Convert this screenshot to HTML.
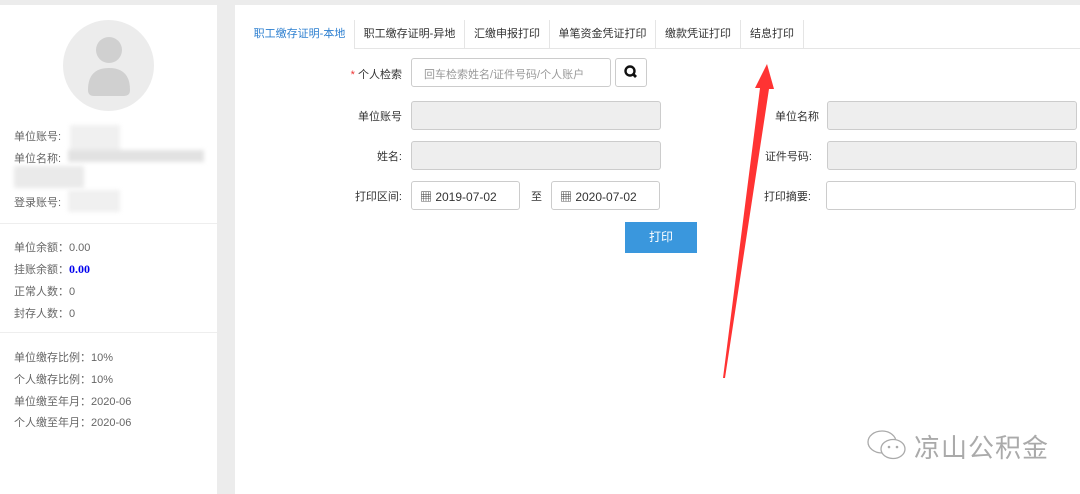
<!DOCTYPE html>
<html><head><meta charset="utf-8"><style>
*{margin:0;padding:0;box-sizing:border-box}
body{width:1080px;height:494px;background:#ececec;position:relative;overflow:hidden;font-family:"Liberation Sans","Noto Sans CJK SC",sans-serif;font-size:11px;color:#555}
.a{position:absolute}
.left{left:0;top:5px;width:217px;height:489px;background:#fff}
.right{left:235px;top:5px;width:845px;height:489px;background:#fff}
.lbl{color:#666;font-size:11px;white-space:nowrap}
.blur{background:#e2e2e2;filter:blur(2px)}
.tab{top:20px;height:28px;border-right:1px solid #e5e5e5;line-height:28px;text-align:center;font-size:11px;color:#333}
.inp{border:1px solid #ccc;border-radius:3px;background:#fff;height:29px}
.dis{background:#eee}
.fl{font-size:11px;color:#333;text-align:right;white-space:nowrap}
</style></head><body>
<div class="a left"></div>
<div class="a right"></div>
<svg class="a" style="left:63px;top:20px" width="91" height="91"><circle cx="45.5" cy="45.5" r="45.5" fill="#ececec"/><circle cx="46" cy="30" r="13" fill="#d0d0d0"/><path d="M25 70 Q25 48 46 48 Q67 48 67 70 Q67 76 61 76 L31 76 Q25 76 25 70Z" fill="#d0d0d0"/></svg>
<div class="a lbl" style="left:14px;top:128px">单位账号:</div>
<div class="a lbl" style="left:14px;top:150px">单位名称:</div>
<div class="a lbl" style="left:14px;top:194px">登录账号:</div>
<div class="a blur" style="left:70px;top:125px;width:50px;height:30px;background:#f0f0f0"></div>
<div class="a blur" style="left:68px;top:150px;width:136px;height:12px"></div>
<div class="a blur" style="left:14px;top:166px;width:70px;height:22px;background:#eaeaea"></div>
<div class="a blur" style="left:68px;top:190px;width:52px;height:22px;background:#f0f0f0"></div>
<div class="a" style="left:0;top:223px;width:217px;height:1px;background:#eee"></div>
<div class="a lbl" style="left:14px;top:239px">单位余额：0.00</div>
<div class="a lbl" style="left:14px;top:261px">挂账余额：<b style="color:#0000ee;font-family:'Liberation Serif',serif;font-size:12px">0.00</b></div>
<div class="a lbl" style="left:14px;top:283px">正常人数：0</div>
<div class="a lbl" style="left:14px;top:305px">封存人数：0</div>
<div class="a" style="left:0;top:332px;width:217px;height:1px;background:#eee"></div>
<div class="a lbl" style="left:14px;top:349px">单位缴存比例：10%</div>
<div class="a lbl" style="left:14px;top:371px">个人缴存比例：10%</div>
<div class="a lbl" style="left:14px;top:393px">单位缴至年月：2020-06</div>
<div class="a lbl" style="left:14px;top:414px">个人缴至年月：2020-06</div>

<div class="a" style="left:245px;top:48px;width:835px;height:1px;background:#e5e5e5"></div>
<div class="a tab" style="left:245px;width:110px;color:#2d7fd0;background:#fff;height:29px">职工缴存证明-本地</div>
<div class="a tab" style="left:355px;width:110px">职工缴存证明-异地</div>
<div class="a tab" style="left:465px;width:85px">汇缴申报打印</div>
<div class="a tab" style="left:550px;width:106px">单笔资金凭证打印</div>
<div class="a tab" style="left:656px;width:85px">缴款凭证打印</div>
<div class="a tab" style="left:741px;width:63px">结息打印</div>

<div class="a fl" style="left:330px;top:66px;width:72px"><span style="color:#e33">*</span> 个人检索</div>
<div class="a inp" style="left:411px;top:58px;width:200px;color:#999;padding:7px 0 0 12px">回车检索姓名/证件号码/个人账户</div>
<div class="a inp" style="left:615px;top:58px;width:32px"><svg width="30" height="27"><circle cx="14" cy="12" r="4.5" fill="none" stroke="#111" stroke-width="2.4"/><line x1="17" y1="15" x2="20" y2="18" stroke="#111" stroke-width="2.8"/></svg></div>
<div class="a fl" style="left:330px;top:108px;width:72px">单位账号</div>
<div class="a inp dis" style="left:411px;top:101px;width:250px"></div>
<div class="a fl" style="left:330px;top:148px;width:72px">姓名:</div>
<div class="a inp dis" style="left:411px;top:141px;width:250px"></div>
<div class="a fl" style="left:330px;top:188px;width:72px">打印区间:</div>
<div class="a inp" style="left:411px;top:181px;width:109px;color:#333;padding:6px 0 0 8px;font-size:12px">▦ 2019-07-02</div>
<div class="a" style="left:531px;top:188px;color:#333">至</div>
<div class="a inp" style="left:551px;top:181px;width:109px;color:#333;padding:6px 0 0 8px;font-size:12px">▦ 2020-07-02</div>
<div class="a" style="left:625px;top:222px;width:72px;height:31px;background:#3a97dd;color:#fff;font-size:12px;text-align:center;line-height:31px">打印</div>

<div class="a fl" style="left:740px;top:108px;width:79px">单位名称</div>
<div class="a inp dis" style="left:827px;top:101px;width:250px"></div>
<div class="a fl" style="left:740px;top:148px;width:72px">证件号码:</div>
<div class="a inp dis" style="left:827px;top:141px;width:250px"></div>
<div class="a fl" style="left:740px;top:188px;width:71px">打印摘要:</div>
<div class="a inp" style="left:826px;top:181px;width:250px"></div>

<svg class="a" style="left:700px;top:50px" width="100" height="340"><polygon points="23,328 60,38 55,38 67,14 74,39 69,39 25,328" fill="#f33"/></svg>
<svg class="a" style="left:865px;top:428px" width="48" height="36"><ellipse cx="17" cy="14" rx="14" ry="11" fill="#fff" stroke="#aaa" stroke-width="1.3"/><ellipse cx="28" cy="21" rx="12" ry="9.5" fill="#fff" stroke="#aaa" stroke-width="1.3"/><circle cx="24" cy="19" r="1.3" fill="#aaa"/><circle cx="32" cy="19" r="1.3" fill="#aaa"/></svg>
<div class="a" style="left:914px;top:428px;font-size:26px;color:#aaa;letter-spacing:1px;font-family:'Noto Sans CJK SC',sans-serif;text-shadow:1px 1px 0 #fff">凉山公积金</div>
</body></html>
